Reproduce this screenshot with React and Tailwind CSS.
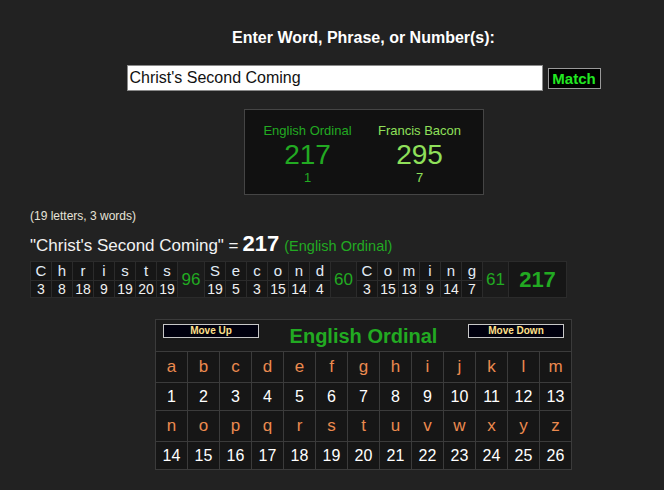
import React from "react";

const words = [
  { letters: [["C", 3], ["h", 8], ["r", 18], ["i", 9], ["s", 19], ["t", 20], ["s", 19]], sum: 96, w: "w-[26px]" },
  { letters: [["S", 19], ["e", 5], ["c", 3], ["o", 15], ["n", 14], ["d", 4]], sum: 60, w: "w-[25px]" },
  { letters: [["C", 3], ["o", 15], ["m", 13], ["i", 9], ["n", 14], ["g", 7]], sum: 61, w: "w-[25px]" },
];

const row1 = "abcdefghijklm".split("");
const row2 = "nopqrstuvwxyz".split("");

function MoveBtn({ children }) {
  return (
    <div className="w-[96px] h-[14px] bg-[#00000e] border border-[#c8c8c8] flex items-center justify-center text-[10px] font-bold leading-none text-[#ffe08a]">
      {children}
    </div>
  );
}

export default function App() {
  return (
    <div
      className="w-[664px] h-[490px] overflow-hidden bg-[#222222] text-white"
      style={{ fontFamily: '"Liberation Sans", Arial, sans-serif' }}
    >
      <div className="w-[727px] flex flex-col">
        <div className="flex flex-col items-center">
          <div className="mt-[29px] text-[16px] leading-[18px] font-bold text-white">
            Enter Word, Phrase, or Number(s):
          </div>
          <div className="mt-[18px] flex items-center gap-[5px]">
            <div className="w-[416px] h-[26px] bg-white border border-[#8a8a8a] flex items-center pl-[2px] text-[16px] text-[#111]">
              Christ's Second Coming
            </div>
            <div className="w-[53px] h-[21px] bg-black border border-[#9a9a9a] flex items-center justify-center text-[15px] font-bold text-[#22e622] leading-none">
              Match
            </div>
          </div>
          <div className="mt-[18px] w-[240px] h-[86px] bg-[#111111] border border-[#454545] flex justify-between px-[20px] pt-[13px]">
            <div className="w-[86px] flex flex-col items-center text-[#22aa22]">
              <div className="text-[13px] leading-[15px] whitespace-nowrap">English Ordinal</div>
              <div className="text-[28px] leading-[30px] mt-[2px]">217</div>
              <div className="text-[13px] leading-[14px] mt-[1px]">1</div>
            </div>
            <div className="w-[86px] flex flex-col items-center text-[#8fe05a]">
              <div className="text-[13px] leading-[15px] whitespace-nowrap">Francis Bacon</div>
              <div className="text-[28px] leading-[30px] mt-[2px]">295</div>
              <div className="text-[13px] leading-[14px] mt-[1px]">7</div>
            </div>
          </div>
        </div>

        <div className="ml-[30px] mt-[14px] text-[12px] leading-[14px] text-[#e6e2d8]">
          (19 letters, 3 words)
        </div>
        <div className="ml-[30px] mt-[4px] h-[24px] flex items-baseline whitespace-nowrap">
          <span className="text-[17px] text-[#f2f2f2]">"Christ's Second Coming" = </span>
          <span className="text-[22px] font-bold text-white ml-[4px]">217</span>
          <span className="text-[14.5px] text-[#22aa22] ml-[5px]">(English Ordinal)</span>
        </div>

        <div className="ml-[30px] mt-[10px] self-start flex bg-[#2b2b2b] p-px gap-px">
          {words.map((wd, i) => (
            <React.Fragment key={i}>
              {wd.letters.map(([l, n], j) => (
                <div key={j} className="flex flex-col gap-px">
                  <div className="w-[20px] h-[18px] bg-[#161616] flex items-center justify-center text-[15px] text-[#e2ecf6]">
                    {l}
                  </div>
                  <div className="w-[20px] h-[16px] bg-[#161616] flex items-center justify-center text-[14px] text-[#f0f0f0]">
                    {n}
                  </div>
                </div>
              ))}
              <div className={`${wd.w} bg-[#1b1b1b] flex items-center justify-center text-[17px] text-[#22aa22]`}>
                {wd.sum}
              </div>
            </React.Fragment>
          ))}
          <div className="w-[57px] bg-[#161616] flex items-center justify-center text-[22px] font-bold text-[#22aa22]">
            217
          </div>
        </div>

        <div className="mt-[21px] self-center flex flex-col bg-[#3b3b3b] p-px gap-px">
          <div className="h-[31px] bg-[#1a1a1a] flex items-start justify-between px-[7px] pt-[4px]">
            <MoveBtn>Move Up</MoveBtn>
            <div className="text-[20px] font-bold text-[#22aa22] leading-[22px] mt-[1px]">English Ordinal</div>
            <MoveBtn>Move Down</MoveBtn>
          </div>
          {[row1, row2].map((row, ri) => (
            <React.Fragment key={ri}>
              <div className="grid grid-cols-[repeat(13,31px)] gap-px">
                {row.map((l) => (
                  <div key={l} className="h-[30px] bg-[#161616] flex items-center justify-center text-[17px] text-[#eb8a4f]">
                    {l}
                  </div>
                ))}
              </div>
              <div className="grid grid-cols-[repeat(13,31px)] gap-px">
                {row.map((l, k) => (
                  <div key={l} className="h-[27px] bg-[#161616] flex items-center justify-center text-[16px] text-white">
                    {ri * 13 + k + 1}
                  </div>
                ))}
              </div>
            </React.Fragment>
          ))}
        </div>
      </div>
    </div>
  );
}
